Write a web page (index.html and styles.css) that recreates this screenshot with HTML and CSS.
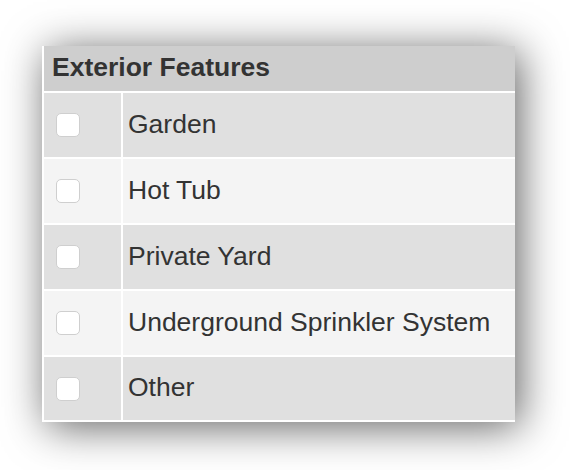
FILE: index.html
```html
<!DOCTYPE html>
<html lang="en">
<head>
    <meta charset="UTF-8">
    <meta name="viewport" content="width=device-width, initial-scale=1.0">
    <title>Exterior Features</title>
    <link rel="stylesheet" href="styles.css">
</head>
<body>
    <div class="panel">
        <table class="features">
            <thead>
                <tr>
                    <th colspan="2">Exterior Features</th>
                </tr>
            </thead>
            <tbody>
                <tr>
                    <td class="check"><input type="checkbox" id="f-garden"></td>
                    <td class="name"><label for="f-garden">Garden</label></td>
                </tr>
                <tr>
                    <td class="check"><input type="checkbox" id="f-hottub"></td>
                    <td class="name"><label for="f-hottub">Hot Tub</label></td>
                </tr>
                <tr>
                    <td class="check"><input type="checkbox" id="f-yard"></td>
                    <td class="name"><label for="f-yard">Private Yard</label></td>
                </tr>
                <tr>
                    <td class="check"><input type="checkbox" id="f-sprinkler"></td>
                    <td class="name"><label for="f-sprinkler">Underground Sprinkler System</label></td>
                </tr>
                <tr>
                    <td class="check"><input type="checkbox" id="f-other"></td>
                    <td class="name"><label for="f-other">Other</label></td>
                </tr>
            </tbody>
        </table>
    </div>
</body>
</html>
```

FILE: styles.css
```css
html, body {
    height: 470px;
}
body {
    margin: 0;
    padding: 0;
    overflow: hidden;
    background-color: #fff;
    font-family: "Liberation Sans", Arial, sans-serif;
    color: #333;
}
.panel {
    margin: 46px 0 0 42px;
    width: 471px;
    padding: 0 0 2px 2px;
    background-color: #fff;
    box-shadow: 5px 5px 40px rgba(0, 0, 0, 0.62);
}
.features {
    width: 100%;
    border-collapse: collapse;
}
.features th {
    height: 46px;
    box-sizing: border-box;
    padding: 0 0 3px 8px;
    text-align: left;
    font-size: 26.5px;
    font-weight: bold;
    background-color: #cecece;
    border-bottom: 2px solid #fff;
}
.features td {
    height: 66px;
    box-sizing: border-box;
    padding: 0;
    font-size: 26.5px;
    border-bottom: 2px solid #fff;
}
.features tbody tr:nth-child(odd) td {
    background-color: #e0e0e0;
}
.features tbody tr:nth-child(even) td {
    background-color: #f4f4f4;
}
.features tbody tr:last-child td {
    height: 64px;
    border-bottom: none;
}
.check {
    width: 78px;
    padding-left: 12px !important;
    border-right: 2px solid #fff;
    vertical-align: middle;
}
.check input {
    appearance: none;
    -webkit-appearance: none;
    display: block;
    margin: 0;
    width: 24px;
    height: 24px;
    border: 1px solid #cfcfcf;
    border-radius: 5px;
    background-color: #fff;
}
.name {
    padding: 0 0 2px 5px !important;
}
```
